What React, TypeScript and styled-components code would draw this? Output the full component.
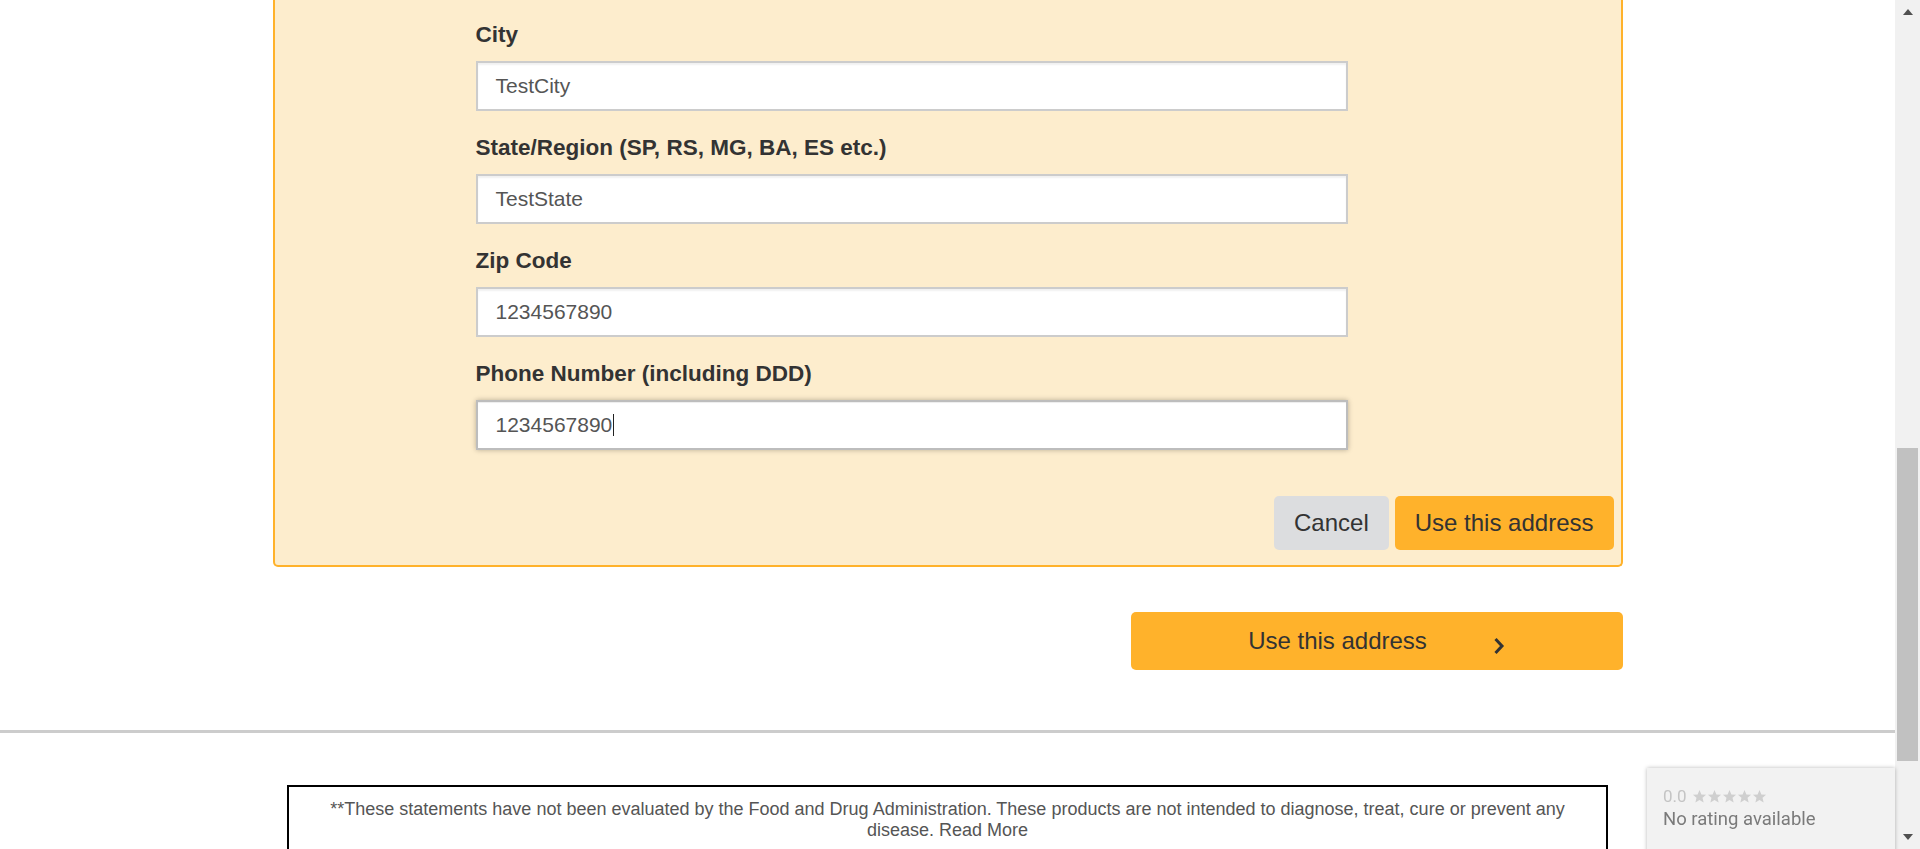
import React from "react";
import styled, { createGlobalStyle, css } from "styled-components";

const GlobalStyle = createGlobalStyle`
  html, body {
    margin: 0;
    padding: 0;
    background: #ffffff;
    font-family: "Liberation Sans", Arial, sans-serif;
    overflow: hidden;
  }
  * { box-sizing: border-box; }
`;

const Viewport = styled.div`
  display: flex;
  flex-direction: row;
  width: 1920px;
  height: 849px;
  overflow: hidden;
`;

const Page = styled.main`
  flex: 1;
  display: flex;
  flex-direction: column;
  min-width: 0;
  overflow: hidden;
  & > * {
    flex-shrink: 0;
  }
`;

const Container = styled.div`
  width: 1350px;
  margin: 0 auto;
  display: flex;
  flex-direction: column;
`;

const Panel = styled.section`
  background: #fdedcd;
  border: 2px solid #ffb22b;
  border-top: none;
  border-radius: 0 0 5px 5px;
  padding: 22px 7px 15px 0;
  display: flex;
  flex-direction: column;
`;

const FormColumn = styled.div`
  padding-left: 201px;
  display: flex;
  flex-direction: column;
`;

const FieldGroup = styled.div`
  display: flex;
  flex-direction: column;
  gap: 13px;
  margin-bottom: 24px;
`;

const Label = styled.label`
  font-size: 22.5px;
  line-height: 26px;
  font-weight: 700;
  color: #333333;
`;

const TextBox = styled.div<{ $focused?: boolean }>`
  width: 872px;
  height: 50px;
  background: #ffffff;
  border: 2px solid #cccccc;
  box-shadow: inset 0 2px 2px rgba(0, 0, 0, 0.06);
  padding: 0 18px;
  display: flex;
  align-items: center;
  font-size: 21px;
  color: #555555;
  ${(p) =>
    p.$focused &&
    css`
      border-color: #bdbdbd;
      box-shadow: inset 0 1px 1px rgba(0, 0, 0, 0.075),
        0 0 5px rgba(0, 0, 0, 0.28);
    `}
`;

const Caret = styled.span`
  display: inline-block;
  width: 1px;
  height: 22px;
  background: #222222;
  margin-left: 1px;
`;

const ButtonRow = styled.div`
  display: flex;
  justify-content: flex-end;
  gap: 6px;
  margin-top: 22px;
`;

const Button = styled.button<{ $variant: "primary" | "secondary" }>`
  height: 54px;
  padding: 0 20px;
  border: none;
  border-radius: 5px;
  font-family: "Liberation Sans", Arial, sans-serif;
  font-size: 24px;
  color: #333333;
  background: ${(p) => (p.$variant === "primary" ? "#ffb22b" : "#dcdddf")};
  cursor: pointer;
`;

const ActionRow = styled.div`
  display: flex;
  justify-content: flex-end;
  margin-top: 45px;
`;

const WideButton = styled.button`
  width: 492px;
  height: 58px;
  border: none;
  border-radius: 5px;
  background: #ffb22b;
  color: #333333;
  font-family: "Liberation Sans", Arial, sans-serif;
  font-size: 24px;
  display: flex;
  align-items: center;
  justify-content: center;
  gap: 66px;
  cursor: pointer;
`;

const ChevronIcon = styled.svg`
  margin-top: 10px;
`;

const Divider = styled.hr`
  margin: 60px 0 0 0;
  border: none;
  height: 3px;
  background: #cccccc;
  width: 100%;
`;

const Disclaimer = styled.div`
  width: 1321px;
  margin: 52px auto 0;
  border: 2px solid #000000;
  border-bottom: none;
  padding: 12px 30px 20px;
  text-align: center;
  font-size: 18px;
  line-height: 21px;
  color: #555555;
`;

const Scrollbar = styled.div`
  width: 25px;
  flex: none;
  height: 849px;
  background: #f1f1f1;
  display: flex;
  flex-direction: column;
  align-items: center;
`;

const ScrollArrow = styled.div`
  height: 24px;
  display: flex;
  align-items: center;
  justify-content: center;
`;

const ScrollTrack = styled.div`
  flex: 1;
  width: 100%;
  display: flex;
  flex-direction: column;
  align-items: center;
`;

const ScrollThumb = styled.div`
  width: 21px;
  height: 313px;
  margin-top: 424px;
  background: #c1c1c1;
`;

const RatingBadge = styled.aside`
  position: fixed;
  left: 1647px;
  top: 768px;
  width: 248px;
  height: 100px;
  background: #f2f2f2;
  box-shadow: 0 0 4px rgba(0, 0, 0, 0.28);
  padding: 19px 16px 0;
  font-family: Roboto, "Liberation Sans", sans-serif;
  display: flex;
  flex-direction: column;
  gap: 3px;
`;

const RatingLine = styled.div`
  display: flex;
  align-items: center;
  gap: 5px;
  font-size: 17px;
  line-height: 18px;
  color: #c4c4c4;
`;

const Stars = styled.span`
  display: flex;
`;

const RatingText = styled.div`
  font-size: 18.5px;
  line-height: 22px;
  color: #7a7a7a;
`;

const Star = () => (
  <svg width="15" height="15" viewBox="0 0 24 24" aria-hidden="true">
    <polygon
      points="12,1.5 15,8.6 22.5,9.2 16.8,14.1 18.6,21.5 12,17.5 5.4,21.5 7.2,14.1 1.5,9.2 9,8.6"
      fill="#cfcfcf"
    />
  </svg>
);

const fields = [
  { label: "City", value: "TestCity" },
  { label: "State/Region (SP, RS, MG, BA, ES etc.)", value: "TestState" },
  { label: "Zip Code", value: "1234567890" },
  { label: "Phone Number (including DDD)", value: "1234567890", focused: true },
];

export default function App() {
  return (
    <>
      <GlobalStyle />
      <Viewport>
        <Page>
          <Container>
            <Panel>
              <FormColumn>
                {fields.map((f) => (
                  <FieldGroup key={f.label}>
                    <Label>{f.label}</Label>
                    <TextBox $focused={f.focused}>
                      {f.value}
                      {f.focused && <Caret />}
                    </TextBox>
                  </FieldGroup>
                ))}
              </FormColumn>
              <ButtonRow>
                <Button $variant="secondary">Cancel</Button>
                <Button $variant="primary">Use this address</Button>
              </ButtonRow>
            </Panel>
            <ActionRow>
              <WideButton>
                <span>Use this address</span>
                <ChevronIcon width="12" height="18" viewBox="0 0 12 18" aria-hidden="true">
                  <path d="M2.5 2 L9 9 L2.5 16" fill="none" stroke="#333333" strokeWidth="3" />
                </ChevronIcon>
              </WideButton>
            </ActionRow>
          </Container>
          <Divider />
          <Disclaimer>
            **These statements have not been evaluated by the Food and Drug Administration. These
            products are not intended to diagnose, treat, cure or prevent any disease. Read More
          </Disclaimer>
        </Page>
        <Scrollbar>
          <ScrollArrow>
            <svg width="10" height="6" viewBox="0 0 10 6" aria-hidden="true">
              <polygon points="5,0 10,6 0,6" fill="#505050" />
            </svg>
          </ScrollArrow>
          <ScrollTrack>
            <ScrollThumb />
          </ScrollTrack>
          <ScrollArrow>
            <svg width="10" height="6" viewBox="0 0 10 6" aria-hidden="true">
              <polygon points="0,0 10,0 5,6" fill="#505050" />
            </svg>
          </ScrollArrow>
        </Scrollbar>
        <RatingBadge>
          <RatingLine>
            <span>0.0</span>
            <Stars>
              <Star />
              <Star />
              <Star />
              <Star />
              <Star />
            </Stars>
          </RatingLine>
          <RatingText>No rating available</RatingText>
        </RatingBadge>
      </Viewport>
    </>
  );
}
